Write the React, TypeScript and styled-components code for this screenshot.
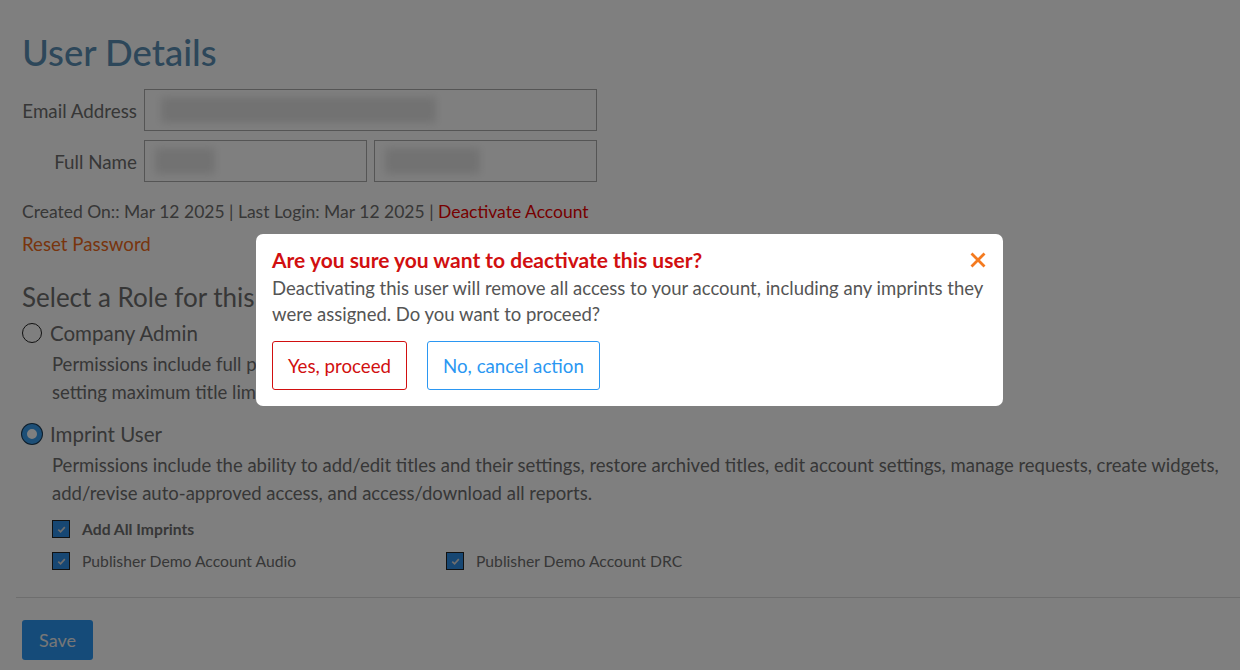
import styled, { createGlobalStyle } from 'styled-components'

const Global = createGlobalStyle`
  html, body { margin: 0; padding: 0; background: #fff; }
  body { font-family: Lato, "Open Sans", sans-serif; color: #666; }
  * { box-sizing: border-box; }
`

const Page = styled.div`
  width: 1240px;
  height: 670px;
  overflow: hidden;
  padding: 30px 0 0 22px;
`

const Title = styled.h1`
  margin: 0 0 15px;
  font-size: 36.5px;
  font-weight: 500;
  line-height: 44px;
  color: #5b8fb5;
`

const FieldRow = styled.div`
  display: flex;
  align-items: center;
  gap: 7px;
  margin-bottom: 9px;
`

const Label = styled.label`
  width: 115px;
  text-align: right;
  font-size: 18.8px;
  color: #6e6e6e;
  white-space: nowrap;
`

const Input = styled.div<{ w: number }>`
  width: ${p => p.w}px;
  height: 42px;
  border: 1px solid #aaa;
  background: #fff;
  overflow: hidden;
  display: flex;
  align-items: center;
  padding-left: ${p => (p.w > 300 ? 16 : 10)}px;
`

const Blur = styled.span<{ w: number }>`
  display: block;
  width: ${p => p.w}px;
  height: 26px;
  background: #e4e4e4;
  filter: blur(4px);
`

const Meta = styled.p`
  margin: 19px 0 0;
  font-size: 17.5px;
  color: #6e6e6e;
`

const DangerLink = styled.a`
  color: #ee0000;
  text-decoration: none;
`

const ResetLink = styled.a`
  display: block;
  margin-top: 11px;
  font-size: 18.7px;
  color: #f06a1a;
`

const Subhead = styled.h2`
  margin: 27px 0 0;
  font-size: 26px;
  font-weight: 400;
  line-height: 30px;
  color: #6e6e6e;
`

const RoleRow = styled.div`
  display: flex;
  align-items: center;
  gap: 8px;
  margin-top: 9px;
  font-size: 20.5px;
  color: #6e6e6e;
`

const Radio = styled.span<{ on?: boolean }>`
  width: 20px;
  height: 20px;
  border-radius: 50%;
  border: ${p => (p.on ? '5px solid #3a9fef' : '1.5px solid #222')};
  box-shadow: ${p => (p.on ? '0 0 0 1px #1a3a55' : 'none')};
  background: #fff;
`

const Desc = styled.p`
  margin: 5px 0 0 30px;
  font-size: 18.5px;
  line-height: 28px;
  color: #6e6e6e;
  white-space: nowrap;
`

const Spacer = styled.div`
  height: 7px;
`

const CheckList = styled.div`
  display: grid;
  grid-template-columns: 394px 1fr;
  row-gap: 14px;
  margin: 13px 0 0 30px;
`

const CheckItem = styled.label<{ bold?: boolean; full?: boolean }>`
  display: flex;
  align-items: center;
  gap: 12px;
  font-size: 15.7px;
  font-weight: ${p => (p.bold ? 700 : 400)};
  color: #6e6e6e;
  grid-column: ${p => (p.full ? '1 / -1' : 'auto')};
`

const Box = styled.span`
  width: 18px;
  height: 18px;
  border: 1px solid #222;
  background: #2f8ee6;
  display: flex;
  align-items: center;
  justify-content: center;
`

const Divider = styled.hr`
  margin: 27px 0 0 -6px;
  border: 0;
  border-top: 1px solid #ddd;
`

const SaveButton = styled.button`
  margin-top: 22px;
  width: 71px;
  height: 40px;
  border: 0;
  border-radius: 3px;
  background: #2b97f2;
  color: #eee;
  font-family: inherit;
  font-size: 18px;
`

const Overlay = styled.div`
  position: fixed;
  inset: 0;
  background: rgba(0, 0, 0, 0.5);
`

const Modal = styled.div`
  position: absolute;
  left: 256px;
  top: 234px;
  width: 747px;
  height: 172px;
  background: #fff;
  border-radius: 7px;
  padding: 13px 16px 0;
`

const ModalHead = styled.div`
  display: flex;
  justify-content: space-between;
  align-items: center;
`

const ModalTitle = styled.h3`
  margin: 0;
  font-size: 21px;
  font-weight: 700;
  color: #d10f10;
  line-height: 26px;
`

const Close = styled.button`
  border: 0;
  background: none;
  padding: 0;
  display: flex;
`

const ModalText = styled.p`
  margin: 2px 0 0;
  font-size: 18.5px;
  line-height: 26px;
  color: #555;
`

const Actions = styled.div`
  display: flex;
  gap: 20px;
  margin-top: 14px;
`

const OutlineButton = styled.button<{ tone: string }>`
  height: 49px;
  padding: 0 15px;
  background: #fff;
  border: 1px solid ${p => p.tone};
  border-radius: 3px;
  color: ${p => p.tone};
  font-family: inherit;
  font-size: 18.7px;
`

const Check = () => (
  <Box>
    <svg width="11" height="11" viewBox="0 0 12 12">
      <path d="M2.5 6.2 5 8.6 9.6 3.4" fill="none" stroke="#ddd" strokeWidth="1.8" />
    </svg>
  </Box>
)

export default function App() {
  return (
    <>
      <Global />
      <Page>
        <Title>User Details</Title>
        <FieldRow>
          <Label>Email Address</Label>
          <Input w={453}>
            <Blur w={275} />
          </Input>
        </FieldRow>
        <FieldRow>
          <Label>Full Name</Label>
          <Input w={223}>
            <Blur w={60} />
          </Input>
          <Input w={223}>
            <Blur w={95} />
          </Input>
        </FieldRow>
        <Meta>
          Created On:: Mar 12 2025 | Last Login: Mar 12 2025 | <DangerLink href="#">Deactivate Account</DangerLink>
        </Meta>
        <ResetLink>Reset Password</ResetLink>

        <Subhead>Select a Role for this User</Subhead>
        <RoleRow>
          <Radio />
          Company Admin
        </RoleRow>
        <Desc>
          Permissions include full privileges to add/edit titles, restore archived titles, and setting up users for any imprint,
          <br />
          setting maximum title limits, editing account settings, and all permissions available to an Imprint User noted below.
        </Desc>
        <Spacer />
        <RoleRow>
          <Radio on />
          Imprint User
        </RoleRow>
        <Desc>
          Permissions include the ability to add/edit titles and their settings, restore archived titles, edit account settings, manage requests, create widgets,
          <br />
          add/revise auto-approved access, and access/download all reports.
        </Desc>
        <CheckList>
          <CheckItem bold full>
            <Check />
            Add All Imprints
          </CheckItem>
          <CheckItem>
            <Check />
            Publisher Demo Account Audio
          </CheckItem>
          <CheckItem>
            <Check />
            Publisher Demo Account DRC
          </CheckItem>
        </CheckList>
        <Divider />
        <SaveButton>Save</SaveButton>
      </Page>
      <Overlay>
        <Modal role="dialog">
          <ModalHead>
            <ModalTitle>Are you sure you want to deactivate this user?</ModalTitle>
            <Close aria-label="Close">
              <svg width="18" height="18" viewBox="0 0 18 18">
                <path d="M2.5 2.5 15.5 15.5M15.5 2.5 2.5 15.5" stroke="#f47a1f" strokeWidth="2.8" />
              </svg>
            </Close>
          </ModalHead>
          <ModalText>
            Deactivating this user will remove all access to your account, including any imprints they were assigned. Do you want to proceed?
          </ModalText>
          <Actions>
            <OutlineButton tone="#d10f10">Yes, proceed</OutlineButton>
            <OutlineButton tone="#2b97f2">No, cancel action</OutlineButton>
          </Actions>
        </Modal>
      </Overlay>
    </>
  )
}
